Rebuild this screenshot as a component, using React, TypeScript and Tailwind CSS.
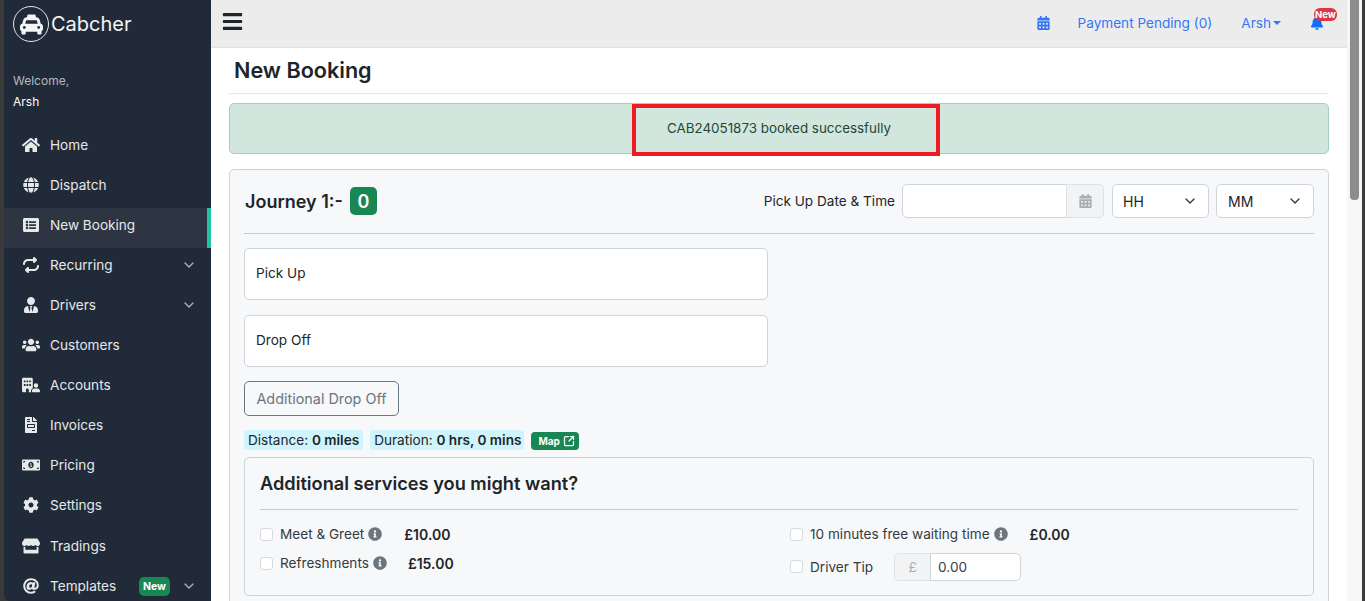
import { ChevronDown, SquareArrowOutUpRight } from "lucide-react";
import type { IconType } from "react-icons";
import {
  FaAt,
  FaBars,
  FaBell,
  FaCalendarAlt,
  FaCog,
  FaFileInvoice,
  FaGlobe,
  FaHome,
  FaInfoCircle,
  FaListAlt,
  FaMoneyBillAlt,
  FaStore,
  FaTaxi,
  FaUsers,
  FaUserTie,
} from "react-icons/fa";
import { FaBuildingUser, FaRepeat } from "react-icons/fa6";

type NavItem = {
  label: string;
  icon: IconType;
  active?: boolean;
  caret?: boolean;
  badge?: string;
  tall?: boolean;
};

const navItems: NavItem[] = [
  { label: "Home", icon: FaHome },
  { label: "Dispatch", icon: FaGlobe },
  { label: "New Booking", icon: FaListAlt, active: true },
  { label: "Recurring", icon: FaRepeat, caret: true },
  { label: "Drivers", icon: FaUserTie, caret: true },
  { label: "Customers", icon: FaUsers },
  { label: "Accounts", icon: FaBuildingUser },
  { label: "Invoices", icon: FaFileInvoice },
  { label: "Pricing", icon: FaMoneyBillAlt },
  { label: "Settings", icon: FaCog },
  { label: "Tradings", icon: FaStore, tall: true },
  { label: "Templates", icon: FaAt, caret: true, badge: "New" },
];

function Sidebar() {
  return (
    <aside className="flex h-full w-[207px] shrink-0 flex-col overflow-hidden rounded-bl-md bg-[#212a39] text-[#e6e8ea]">
      <div className="flex h-[47px] shrink-0 items-center gap-[2px] pl-[9px] pt-[1px]">
        <span className="flex h-[36px] w-[36px] items-center justify-center rounded-full border border-[#e6e8ea] text-[#f4f4f4]">
          <FaTaxi className="h-[23px] w-[23px]" />
        </span>
        <span className="text-[20px] leading-none text-[#f4f4f4]">Cabcher</span>
      </div>
      <div className="shrink-0 pt-[23px] pl-[9px] text-[12px] leading-[21px]">
        <div className="text-[#b4b8be]">Welcome,</div>
        <div className="text-white">Arsh</div>
      </div>
      <nav className="mt-[16px] flex shrink-0 flex-col text-[13.6px]">
        {navItems.map((item) => (
          <div
            key={item.label}
            className={
              item.active
                ? "flex h-[40px] shrink-0 items-center border-r-4 border-[#20c5a0] bg-[#2c3541] pb-[6px] pl-[17px]"
                : item.tall
                  ? "flex h-[41px] shrink-0 items-center pb-[6px] pl-[17px] pr-[14px] pt-[1px]"
                  : "flex h-[40px] shrink-0 items-center pb-[6px] pl-[17px] pr-[14px]"
            }
          >
            <span className="flex w-[19px] justify-center">
              <item.icon className="h-[16px] w-[18px]" />
            </span>
            <span className="ml-[10px]">{item.label}</span>
            {item.badge && (
              <span className="ml-auto rounded-[5px] bg-[#198754] px-[4px] py-[2px] text-[10.5px] font-bold leading-[15px] text-white">
                {item.badge}
              </span>
            )}
            {item.caret && (
              <ChevronDown
                className={
                  item.badge
                    ? "ml-[11px] h-[16px] w-[16px] text-[#aeb3ba]"
                    : "ml-auto h-[16px] w-[16px] text-[#aeb3ba]"
                }
              />
            )}
          </div>
        ))}
      </nav>
    </aside>
  );
}

function Topbar() {
  return (
    <header className="flex h-[48px] shrink-0 items-center border-b border-[#dfe1e5] bg-[#ececec] pb-[1px] pl-[11px] pr-[23px] text-[13.6px] text-[#3377f6]">
      <FaBars className="h-[22px] w-[21px] -translate-y-[1.5px] text-[#212529]" />
      <FaCalendarAlt className="ml-auto h-[14px] w-[13px]" />
      <span className="ml-[28px]">Payment Pending (0)</span>
      <span className="ml-[29px]">Arsh</span>
      <span className="ml-[2px] h-0 w-0 border-x-[4.5px] border-t-[4.5px] border-x-transparent border-t-[#3377f6]" />
      <span className="relative ml-[29px] text-[#0d6efd]">
        <FaBell className="h-[14px] w-[14px]" />
        <span className="absolute -top-[8px] left-[4px] rounded-[6px] bg-[#dc3545] px-[1px] text-[9.5px] font-bold leading-[13px] text-white">
          New
        </span>
      </span>
    </header>
  );
}

function SelectBox({ label, box }: { label: string; box: string }) {
  return (
    <div
      className={`flex h-[34px] items-center justify-between rounded-[5px] border border-[#ced4da] bg-white pr-[10px] text-[14px] ${box}`}
    >
      <span>{label}</span>
      <ChevronDown className="h-[16px] w-[16px] text-[#343a40]" />
    </div>
  );
}

function TextBox({ label }: { label: string }) {
  return (
    <div className="flex h-[52px] w-[524px] items-center rounded-[5px] border border-[#ced4da] bg-white px-[11px] pb-[2px] text-[13.6px]">
      {label}
    </div>
  );
}

function ServiceLabel({ label, info }: { label: string; info?: boolean }) {
  return (
    <div className="flex items-center">
      <span className="h-[13px] w-[13px] rounded-[3px] border border-[#d6d9dd] bg-white" />
      <span className="ml-[7px] text-[13.6px] text-[#333a42]">{label}</span>
      {info && <FaInfoCircle className="ml-[4px] h-[14px] w-[14px] text-[#6c757d]" />}
    </div>
  );
}

function ServicesCard() {
  return (
    <section className="h-[139px] rounded-[5px] border border-[#ced1d6] px-[15px]">
      <h3 className="flex h-[52px] items-center border-b border-[#c8cacd] text-[18.2px] font-semibold text-[#212529]">
        Additional services you might want?
      </h3>
      <div className="flex pt-[14px]">
        <div className="flex w-[530px] flex-col gap-[8px]">
          <div className="flex h-[21px] items-center">
            <ServiceLabel label="Meet & Greet" info />
            <span className="ml-[22px] text-[14px] font-semibold text-[#212529]">£10.00</span>
          </div>
          <div className="flex h-[21px] items-center">
            <ServiceLabel label="Refreshments" info />
            <span className="ml-[21px] text-[14px] font-semibold text-[#212529]">£15.00</span>
          </div>
        </div>
        <div className="flex flex-col gap-[8px]">
          <div className="flex h-[21px] items-center">
            <ServiceLabel label="10 minutes free waiting time" info />
            <span className="ml-[22px] text-[14px] font-semibold text-[#212529]">£0.00</span>
          </div>
          <div className="flex h-[28px] items-center">
            <ServiceLabel label="Driver Tip" />
            <div className="ml-[21px] flex h-[28px] text-[13.6px]">
              <span className="flex w-[37px] items-center justify-center rounded-l-[5px] border border-[#dee2e6] bg-[#f1f3f5] text-[#a9adb2]">
                £
              </span>
              <span className="-ml-px flex w-[91px] items-center rounded-r-[5px] border border-[#ced4da] bg-white px-[7px] text-[#3a4148]">
                0.00
              </span>
            </div>
          </div>
        </div>
      </div>
    </section>
  );
}

function JourneyCard() {
  return (
    <section className="mt-[15px] rounded-[5px] border border-[#ced1d6] bg-[#f7f8fa] px-[14px] pb-[20px] pt-[14px] text-[#212529]">
      <div className="flex h-[34px] items-center">
        <span className="ml-px text-[18px] font-semibold">Journey 1:-</span>
        <span className="ml-[7px] flex h-[28px] w-[27px] items-center justify-center rounded-[5px] bg-[#198754] text-[18px] font-semibold text-white">
          0
        </span>
        <span className="ml-auto text-[13.6px]">Pick Up Date &amp; Time</span>
        <div className="ml-[7px] flex h-[34px]">
          <span className="w-[165px] rounded-l-[5px] border border-[#ced4da] bg-white" />
          <span className="-ml-px flex w-[38px] items-center justify-center rounded-r-[5px] border border-[#dee2e6] bg-[#f1f3f5] text-[#a9adb2]">
            <FaCalendarAlt className="h-[14px] w-[13px]" />
          </span>
        </div>
        <div className="ml-[8px] flex gap-[7px]">
          <SelectBox label="HH" box="w-[97px] pl-[10px]" />
          <SelectBox label="MM" box="w-[98px] pl-[11px]" />
        </div>
      </div>
      <div className="mt-[15px] border-t border-[#c8cacd]" />
      <div className="mt-[14px] flex flex-col gap-[15px]">
        <TextBox label="Pick Up" />
        <TextBox label="Drop Off" />
      </div>
      <div className="mt-[14px] flex h-[35px] w-[155px] items-center justify-center rounded-[5px] border border-[#6c757d] text-[14.4px] text-[#6c757d]">
        Additional Drop Off
      </div>
      <div className="mt-[14px] flex h-[20px] items-center text-[13.6px]">
        <span className="flex h-[20px] items-center rounded-[3px] bg-[#cff4fc] px-[4px]">
          Distance:&nbsp;<b className="font-semibold">0 miles</b>
        </span>
        <span className="ml-[7px] flex h-[20px] items-center rounded-[3px] bg-[#cff4fc] pl-[4px] pr-[3px]">
          Duration:&nbsp;<b className="font-semibold">0 hrs, 0 mins</b>
        </span>
        <span className="ml-[7px] mt-[2px] flex h-[18px] items-center gap-[3px] rounded-[4px] bg-[#198754] pl-[7px] pr-[4px] text-[10px] font-bold text-white">
          Map
          <SquareArrowOutUpRight className="h-[12px] w-[12px]" strokeWidth={2.5} />
        </span>
      </div>
      <div className="mt-[7px]">
        <ServicesCard />
      </div>
    </section>
  );
}

export default function App() {
  return (
    <div className="flex h-screen overflow-hidden bg-[#3a3a3a] font-['Inter',sans-serif]">
      <div className="w-[4px] shrink-0" />
      <Sidebar />
      <main className="flex min-w-0 flex-1 flex-col bg-white">
        <Topbar />
        <div className="relative px-[18px]">
          <div className="flex h-[46px] items-center border-b border-[#e6e7e9] pl-[5px] text-[21.6px] font-semibold text-[#212529]">
            New Booking
          </div>
          <div className="mt-[9px] flex h-[51px] items-center justify-center rounded-[5px] border border-[#a3cfbb] bg-[#d1e7dd] text-[13.4px] text-[#28443a]">
            CAB24051873 booked successfully
          </div>
          <div className="pointer-events-none absolute left-[421px] top-[56px] h-[52px] w-[308px] border-[4px] border-[#ed1c24]" />
          <JourneyCard />
        </div>
      </main>
      <div className="w-[15px] shrink-0 bg-[#f6f6f6] px-[3px]">
        <div className="h-[200px] rounded-b-[4px] bg-[#8c8c8c]" />
      </div>
      <div className="w-[3px] shrink-0" />
    </div>
  );
}
